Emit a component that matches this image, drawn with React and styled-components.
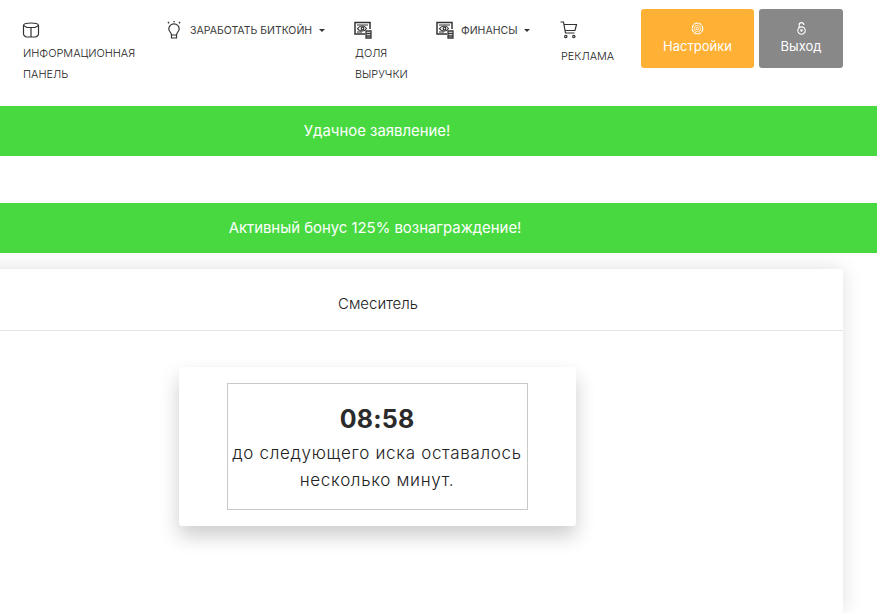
import React from 'react';
import styled, { createGlobalStyle } from 'styled-components';

const Global = createGlobalStyle`
  html, body {
    margin: 0;
    background: #fff;
    font-family: "Inter", "Open Sans", sans-serif;
    color: #333;
  }
  body { height: 613px; overflow: hidden; }
`;

const Nav = styled.nav`
  display: flex;
  align-items: flex-start;
  height: 106px;
  padding: 9px 0 0 22px;
  box-sizing: border-box;
`;

const NavItem = styled.div`
  width: ${p => p.$w}px;
  flex: none;
  padding-top: 12px;
`;

const NavRow = styled.div`
  display: flex;
  align-items: center;
  height: 18px;
  gap: 7px;
  font-size: 10.5px;
  color: #3a3a3a;
  white-space: nowrap;
`;

const NavText = styled.div`
  margin-top: ${p => p.$top}px;
  margin-left: 1px;
  font-size: 10.9px;
  font-weight: 300;
  line-height: 21px;
  color: #222;
  white-space: nowrap;
`;

const Caret = styled.span`
  width: 0;
  height: 0;
  border-top: 3px solid #333;
  border-left: 3px solid transparent;
  border-right: 3px solid transparent;
`;

const ActionButton = styled.button`
  width: ${p => p.$w}px;
  height: 59px;
  flex: none;
  margin-right: 5px;
  border: 0;
  border-radius: 3px;
  background: ${p => p.$bg};
  color: #fff;
  font: 13px "Inter", sans-serif;
  display: flex;
  flex-direction: column;
  align-items: center;
  gap: 3px;
  padding: 13px 0 0;
`;

const Alert = styled.div`
  height: 50px;
  box-sizing: border-box;
  background: #47d93f;
  color: #fff;
  font-size: 14.9px;
  display: flex;
  align-items: center;
  justify-content: center;
  padding: 0 ${p => p.$shift}px 1px 0;
  margin-bottom: ${p => p.$bottom || 0}px;
`;

const Card = styled.section`
  width: 930px;
  margin: 16px 0 0 -87px;
  height: 344px;
  background: #fff;
  border-radius: 4px 4px 0 0;
  box-shadow: 0 0 20px rgba(0, 0, 0, 0.13);
`;

const CardHeader = styled.header`
  height: 62px;
  box-sizing: border-box;
  border-bottom: 1px solid #e4e4e4;
  display: flex;
  align-items: center;
  justify-content: center;
  padding-top: 8px;
  font-size: 15px;
  font-weight: 300;
  color: #222;
`;

const CardBody = styled.div`
  display: flex;
  justify-content: center;
  padding: 36px 2px 0 0;
`;

const TimerCard = styled.div`
  width: 397px;
  height: 159px;
  box-sizing: border-box;
  padding: 16px 48px;
  background: #fff;
  border-radius: 3px;
  box-shadow: 0 10px 20px rgba(0, 0, 0, 0.2);
`;

const TimerBox = styled.div`
  height: 127px;
  box-sizing: border-box;
  border: 1px solid #c8c8c8;
  text-align: center;
  padding-top: 18px;
`;

const Time = styled.div`
  font-size: 25px;
  font-weight: 700;
  letter-spacing: 0.2px;
  line-height: 34px;
  color: #2b2b2b;
`;

const Message = styled.div`
  margin-top: 4px;
  font-size: 17px;
  font-weight: 300;
  letter-spacing: 0.67px;
  line-height: 27px;
  color: #222;
  white-space: nowrap;
`;

const Svg = styled.svg`
  width: ${p => p.$s || 18}px;
  height: ${p => p.$s || 18}px;
  flex: none;
  display: block;
  fill: none;
  stroke: ${p => p.$c || '#333'};
  stroke-width: 1.2;
`;

const CubeIcon = () => (
  <Svg viewBox="0 0 18 18">
    <path d="M1.500 4.500C1.500 3 5 2 9 2s7.500 1 7.500 2.500v8.500c0 1.500-2 3-3 3h-9c-1 0-3-1.500-3-3z" />
    <path d="M1.500 4.500 5 6.500h8l3.500-2M9 6.500V16" />
  </Svg>
);

const BulbIcon = () => (
  <Svg viewBox="0 0 18 18">
    <path d="M6.500 14h5v3h-5zM6.500 14c0-2.500-2.700-3.500-2.700-6a5.200 5.200 0 0 1 10.400 0c0 2.500-2.700 3.500-2.700 6" />
    <path d="M9 0v1.300M3 1l1 1.200M15 1l-1 1.200" strokeWidth="1.400" />
  </Svg>
);

const MoneyIcon = () => (
  <Svg viewBox="0 0 18 18">
    <path d="M11 13H1V1.500h15V8" strokeWidth="1.500" />
    <path d="M3 4h11M3 11h5" />
    <path d="M3.500 7.500C5 5.500 7 5 8.500 5s3 1 4 2.500c-1 1.500-2 2.500-4 2.500s-4-.7-5-2.500z" />
    <circle cx="8.500" cy="7.500" r="1.300" />
    <path d="M12 10h5v7h-5zM12 12.500h5M12 15h5" strokeWidth="1.300" />
  </Svg>
);

const CartIcon = () => (
  <Svg viewBox="0 0 18 18">
    <path d="M0.500 1h3l2 11h9M4 3.500h12.500l-1.500 6H5.200" />
    <circle cx="5.800" cy="15.500" r="1.200" />
    <circle cx="13.800" cy="15.500" r="1.200" />
  </Svg>
);

const GearIcon = () => (
  <Svg viewBox="0 0 14 14" $s={13} $c="#fff">
    <circle cx="7" cy="7" r="5.700" strokeDasharray="3.800 .7" strokeWidth="1.300" />
    <circle cx="7" cy="7" r="3.400" strokeWidth=".8" />
    <circle cx="7" cy="7" r="1.300" strokeWidth="1" />
  </Svg>
);

const LockIcon = () => (
  <Svg viewBox="0 0 14 14" $s={13} $c="#fff">
    <path d="M4.500 6.500V3.200a2.500 2.500 0 0 1 5 0" />
    <circle cx="7" cy="9.200" r="4" />
    <path d="M5.800 8.300h2.400L7 10.800z" fill="#fff" strokeWidth=".6" />
  </Svg>
);

export default function App() {
  return (
    <>
      <Global />
      <Nav>
        <NavItem $w={143}>
          <NavRow><CubeIcon /></NavRow>
          <NavText $top={4}>ИНФОРМАЦИОННАЯ<br />ПАНЕЛЬ</NavText>
        </NavItem>
        <NavItem $w={189}>
          <NavRow><BulbIcon />ЗАРАБОТАТЬ БИТКОЙН<Caret /></NavRow>
        </NavItem>
        <NavItem $w={82}>
          <NavRow><MoneyIcon /></NavRow>
          <NavText $top={4}>ДОЛЯ<br />ВЫРУЧКИ</NavText>
        </NavItem>
        <NavItem $w={124}>
          <NavRow><MoneyIcon />ФИНАНСЫ<Caret /></NavRow>
        </NavItem>
        <NavItem $w={81}>
          <NavRow><CartIcon /></NavRow>
          <NavText $top={7}>РЕКЛАМА</NavText>
        </NavItem>
        <ActionButton $w={113} $bg="#ffb136"><GearIcon />Настройки</ActionButton>
        <ActionButton $w={84} $bg="#888888"><LockIcon />Выход</ActionButton>
      </Nav>
      <Alert $shift={123} $bottom={47}>Удачное заявление!</Alert>
      <Alert $shift={127}>Активный бонус 125% вознаграждение!</Alert>
      <Card>
        <CardHeader>Смеситель</CardHeader>
        <CardBody>
          <TimerCard>
            <TimerBox>
              <Time>08:58</Time>
              <Message>до следующего иска оставалось<br />несколько минут.</Message>
            </TimerBox>
          </TimerCard>
        </CardBody>
      </Card>
    </>
  );
}
